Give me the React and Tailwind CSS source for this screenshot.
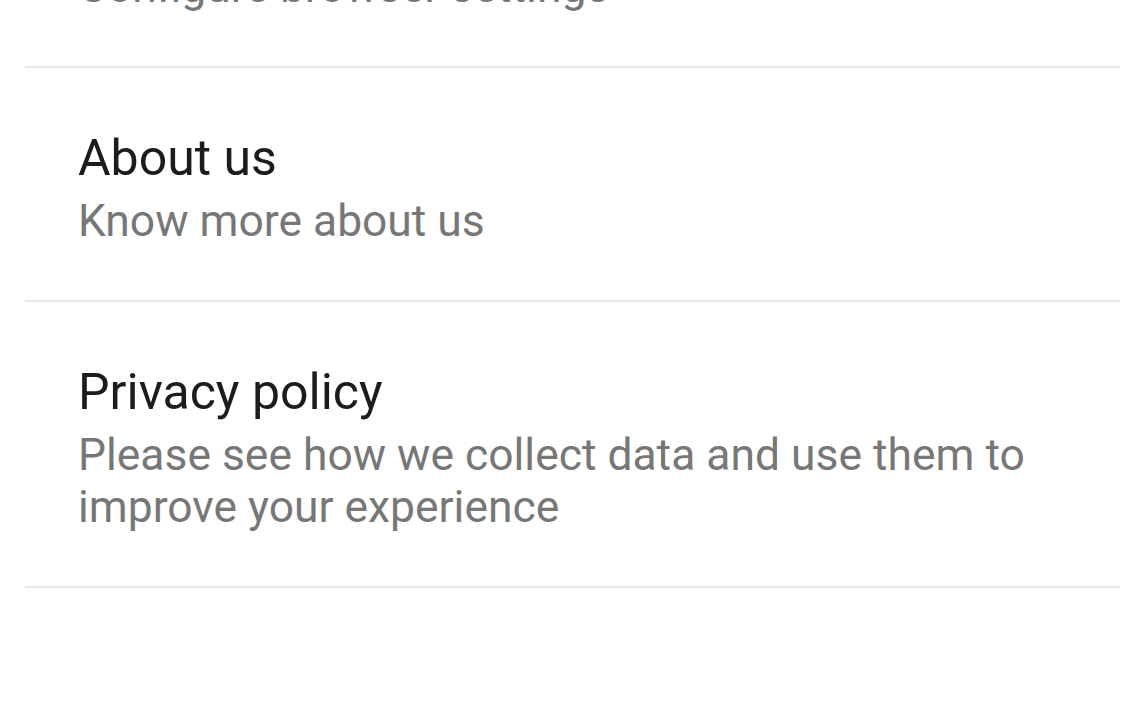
const items = [
  { title: "Browser", subtitle: "Configure browser settings" },
  { title: "About us", subtitle: "Know more about us" },
  {
    title: "Privacy policy",
    subtitle: "Please see how we collect data and use them to improve your experience",
  },
];

export default function App() {
  return (
    <div className="h-[716px] w-full overflow-hidden bg-white font-['Roboto',sans-serif]">
      {/* list starts above the viewport, only the tail of the first row is visible */}
      <div className="mt-[-166px] pl-[25px] pr-[26px]">
        {items.map((item) => (
          <div key={item.title}>
            <div className="pl-[53px] pr-[20px] pt-[60px] pb-[53px]">
              <p className="text-[50px] leading-[60px] text-[#1c1c1c]">{item.title}</p>
              <p className="mt-[7px] text-[44.4px] leading-[52px] text-[#777777]">
                {item.subtitle}
              </p>
            </div>
            <div className="h-[2px] bg-[#e8e8e8]" />
          </div>
        ))}
      </div>
    </div>
  );
}
